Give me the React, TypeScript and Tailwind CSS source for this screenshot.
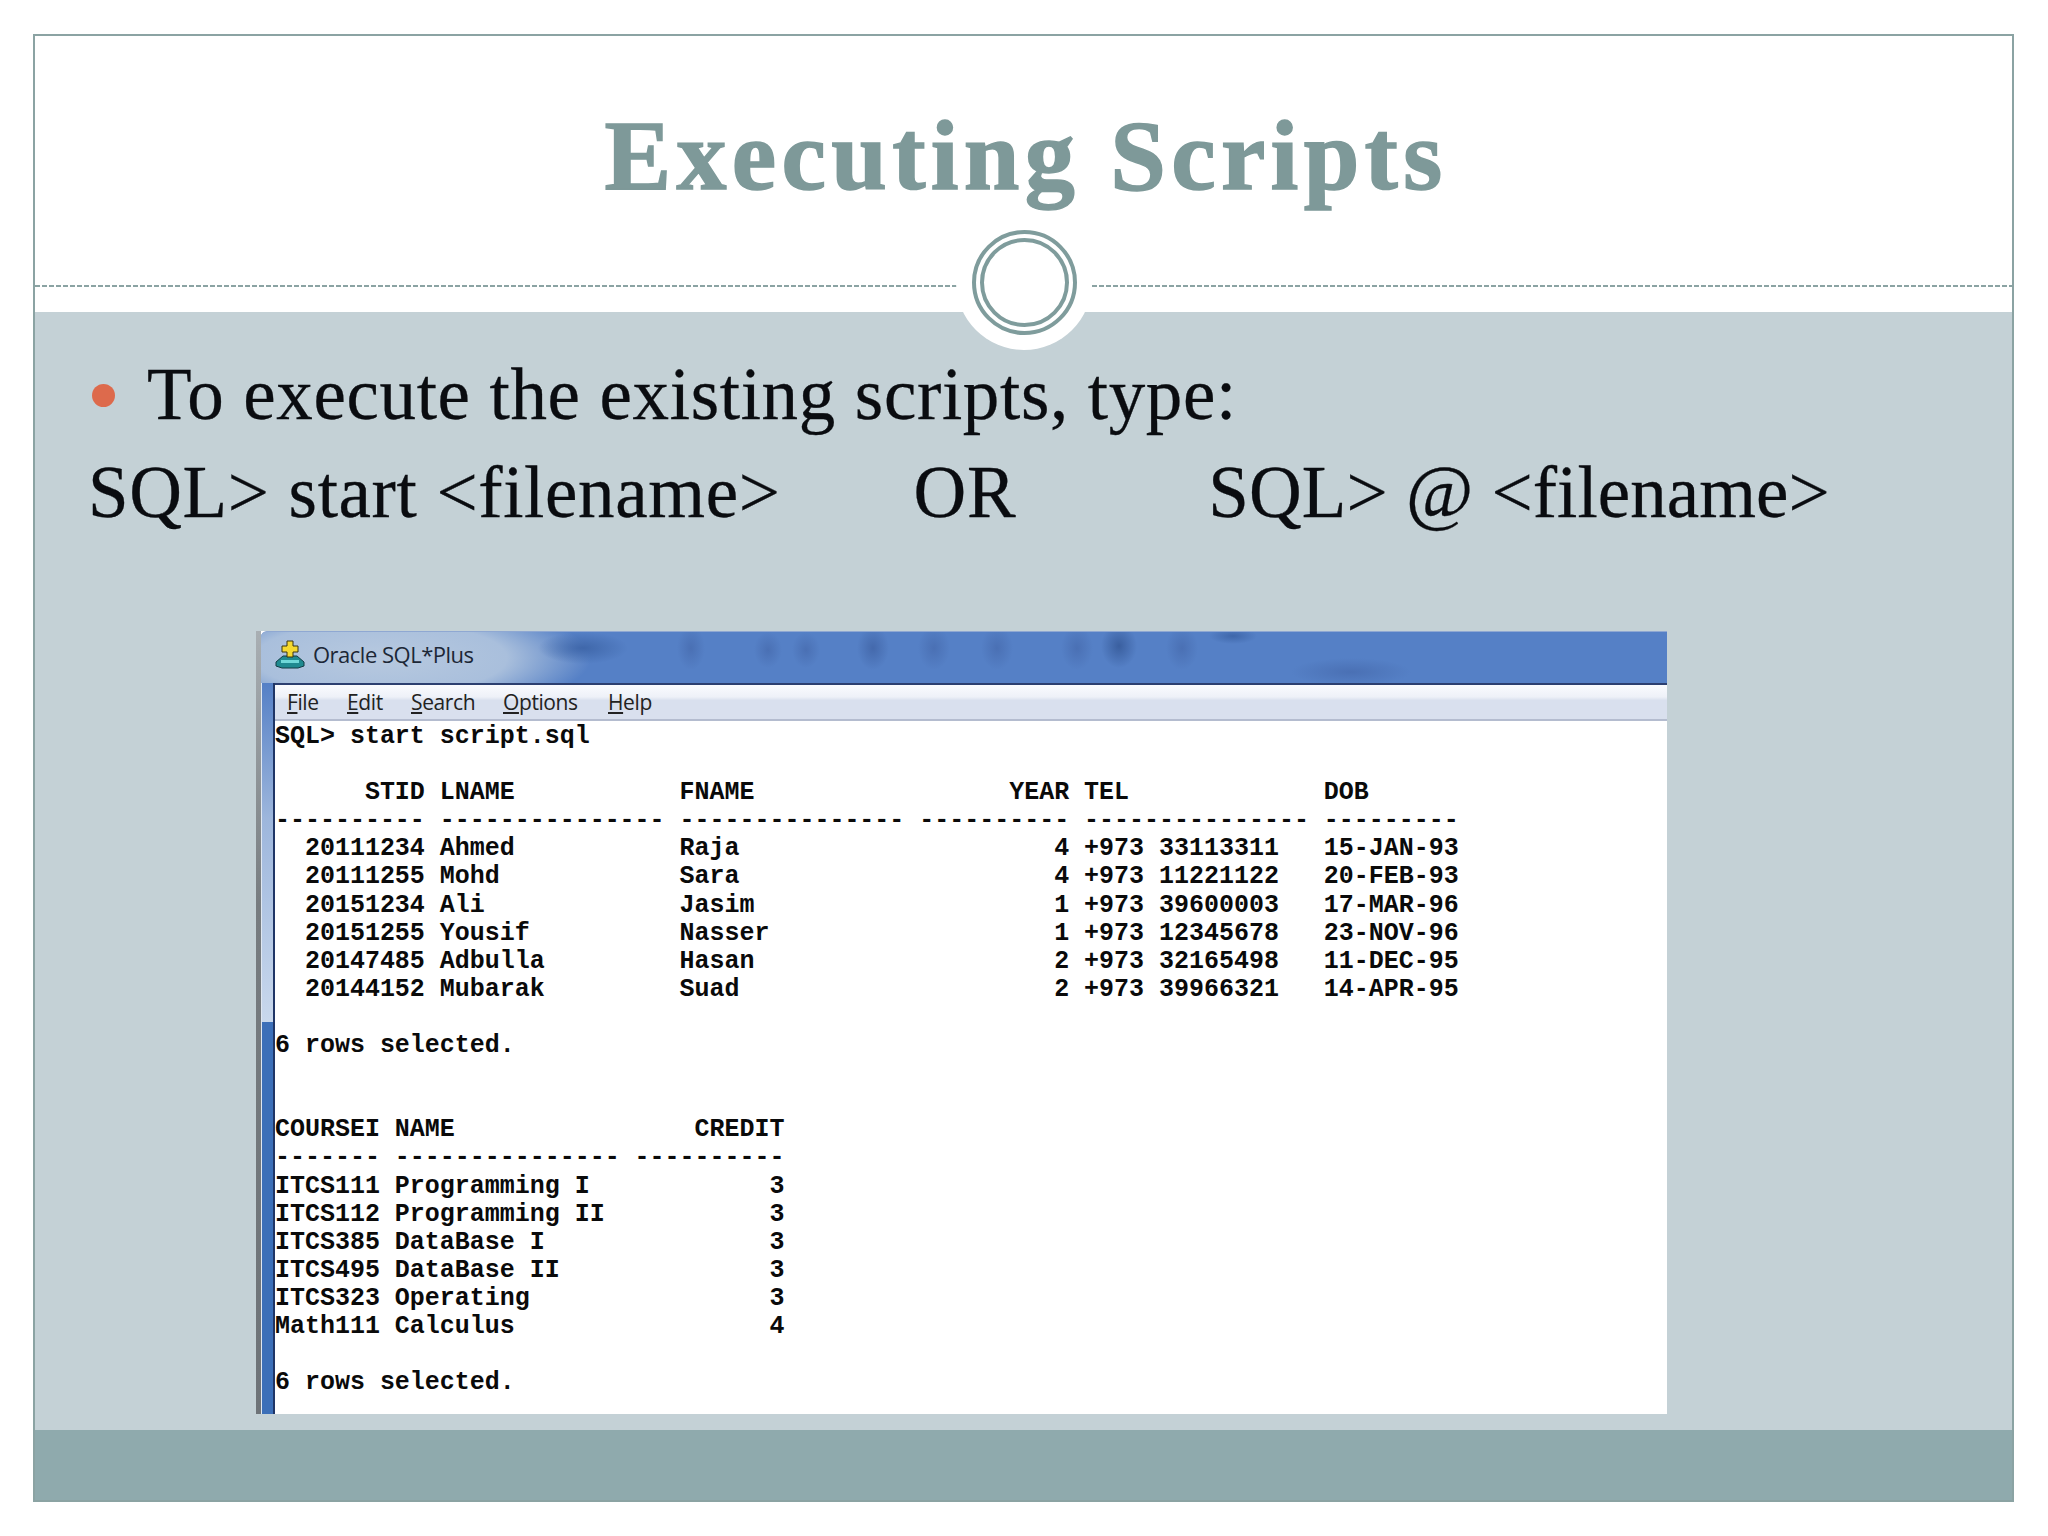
const rows1: [string, string, string, string, string, string][] = [
  ["20111234", "Ahmed", "Raja", "4", "+973 33113311", "15-JAN-93"],
  ["20111255", "Mohd", "Sara", "4", "+973 11221122", "20-FEB-93"],
  ["20151234", "Ali", "Jasim", "1", "+973 39600003", "17-MAR-96"],
  ["20151255", "Yousif", "Nasser", "1", "+973 12345678", "23-NOV-96"],
  ["20147485", "Adbulla", "Hasan", "2", "+973 32165498", "11-DEC-95"],
  ["20144152", "Mubarak", "Suad", "2", "+973 39966321", "14-APR-95"],
];
const rows2: [string, string, string][] = [
  ["ITCS111", "Programming I", "3"],
  ["ITCS112", "Programming II", "3"],
  ["ITCS385", "DataBase I", "3"],
  ["ITCS495", "DataBase II", "3"],
  ["ITCS323", "Operating", "3"],
  ["Math111", "Calculus", "4"],
];
const fmt1 = (r: string[]) =>
  `${r[0].padStart(10)} ${r[1].padEnd(15)} ${r[2].padEnd(15)} ${r[3].padStart(10)} ${r[4].padEnd(15)} ${r[5]}`;
const fmt2 = (r: string[]) => `${r[0].padEnd(7)} ${r[1].padEnd(15)} ${r[2].padStart(10)}`;
const d = (n: number) => "-".repeat(n);
const output = [
  "SQL> start script.sql",
  "",
  fmt1(["STID", "LNAME", "FNAME", "YEAR", "TEL", "DOB"]),
  [d(10), d(15), d(15), d(10), d(15), d(9)].join(" "),
  ...rows1.map(fmt1),
  "",
  "6 rows selected.",
  "",
  "",
  `COURSEI ${"NAME".padEnd(15)} ${"CREDIT".padStart(10)}`,
  [d(7), d(15), d(10)].join(" "),
  ...rows2.map(fmt2),
  "",
  "6 rows selected.",
].join("\n");

const Menu = ({ k, rest, w }: { k: string; rest: string; w: string }) => (
  <span className={w}>
    <span className="underline underline-offset-2">{k}</span>
    {rest}
  </span>
);

export default function App() {
  return (
    <div className="w-[2048px] h-[1536px] bg-white pt-[34px] pl-[33px] font-['Liberation_Serif',serif]">
      <div className="w-[1981px] h-[1468px] border-2 border-[#8ba3a3] flex flex-col">
        <header className="relative h-[276px] bg-white flex justify-center">
          <h1 className="mt-[65px] ml-[5px] text-[100px] leading-[110px] font-bold text-[#7e9999] tracking-[5.3px] [-webkit-text-stroke:1.5px_#7e9999]">Executing Scripts</h1>
          <div className="absolute left-0 right-0 top-[249px] h-[2px] bg-[repeating-linear-gradient(90deg,#8ba3a3_0px,#8ba3a3_5px,transparent_5px,transparent_7px)]" />
          <div className="absolute left-[921px] top-[178px] w-[136px] h-[136px] rounded-full bg-white flex items-center justify-center">
            <div className="w-[105px] h-[105px] rounded-full border-[4px] border-[#7f9c9c] flex items-center justify-center">
              <div className="w-[89px] h-[89px] rounded-full border-[4px] border-[#7f9c9c]" />
            </div>
          </div>
        </header>
        <main className="flex-1 bg-[#c4d1d6] pl-[53px] text-[#0a0c10] text-[73px] leading-[80px] tracking-[0.65px] [-webkit-text-stroke:0.3px_#0a0c10]">
          <div className="flex items-center mt-[43px] h-[80px]">
            <span className="ml-[4px] w-[23px] h-[23px] rounded-full bg-[#dd6a4c]" />
            <span className="ml-[32px]">To execute the existing scripts, type:</span>
          </div>
          <div className="flex mt-[18px] whitespace-pre">
            <span>SQL&gt; start &lt;filename&gt;</span>
            <span className="ml-[133px]">OR</span>
            <span className="ml-[192px] tracking-[0.05px]">SQL&gt; @ &lt;filename&gt;</span>
          </div>
          <div className="ml-[168px] mt-[98px] w-[1411px] h-[783px] flex tracking-normal [-webkit-text-stroke:0px]">
            <div className="w-[5px] bg-[linear-gradient(#a9afb3,#777c80_35%,#6e7378)]" />
            <div className="flex-1 flex flex-col bg-white min-w-0">
              <div className="h-[52px] shrink-0 flex items-center pl-[14px] pb-[7px] bg-[#5580c6] bg-[radial-gradient(ellipse_45px_16px_at_322px_16px,#3f67aa,transparent),radial-gradient(ellipse_14px_22px_at_430px_16px,#4a70b4,transparent),radial-gradient(ellipse_14px_18px_at_507px_18px,#4a70b4,transparent),radial-gradient(ellipse_14px_18px_at_545px_18px,#4a70b4,transparent),radial-gradient(ellipse_16px_22px_at_612px_16px,#4469ac,transparent),radial-gradient(ellipse_16px_22px_at_673px_16px,#4a70b4,transparent),radial-gradient(ellipse_16px_22px_at_736px_16px,#4a70b4,transparent),radial-gradient(ellipse_16px_22px_at_816px_16px,#4a70b4,transparent),radial-gradient(ellipse_18px_22px_at_858px_14px,#3a5f9f,transparent),radial-gradient(ellipse_16px_22px_at_921px_16px,#4a70b4,transparent),radial-gradient(ellipse_60px_14px_at_1090px_40px,#4a70b4,transparent),radial-gradient(ellipse_24px_8px_at_972px_4px,#3f67aa,transparent),radial-gradient(ellipse_210px_60px_at_120px_26px,#b7c9df_0%,#a9bfdc_60%,transparent_100%)] border-t border-[#8fa8d2] rounded-tl-[6px] text-[#1c2736] font-['Open_Sans',sans-serif] text-[22px] leading-none">
                <svg viewBox="0 0 30 30" className="w-[30px] h-[30px]">
                  <path d="M1 23 L8 17 H22 L29 23 V27 L23 29 H7 L1 27 Z" fill="#1f8a90" stroke="#123c44" />
                  <rect x="6" y="21" width="18" height="3" fill="#6fd8d8" />
                  <path d="M12 2 H18 V7 H23 V13 H18 V18 H12 V13 H7 V7 H12 Z" fill="#f5d930" stroke="#3a3410" />
                </svg>
                <span className="ml-[8px] tracking-[-0.5px]">Oracle SQL*Plus</span>
              </div>
              <div className="flex-1 flex min-h-0">
                <div className="w-[12px] shrink-0 flex flex-col border-l border-[#dfe7f1]">
                  <div className="flex-1 bg-[linear-gradient(#5580c6,#9db6dc_40%,#c9d8ec)]" />
                  <div className="h-[392px] bg-[#3c6fb8]" />
                </div>
                <div className="flex-1 flex flex-col border-l-2 border-[#1f3566] min-w-0">
                  <div className="h-[38px] shrink-0 flex items-center pl-[12px] border-t-2 border-[#2c3f70] border-b-2 border-b-[#b4bccf] bg-[linear-gradient(#fafbfe_0%,#eef1f8_35%,#d9e0ee_45%,#d9e0ee_100%)] text-[#222222] font-['Open_Sans',sans-serif] text-[21px] leading-none tracking-[-0.4px]">
                    <Menu k="F" rest="ile" w="w-[60px]" />
                    <Menu k="E" rest="dit" w="w-[64px]" />
                    <Menu k="S" rest="earch" w="w-[92px]" />
                    <Menu k="O" rest="ptions" w="w-[105px]" />
                    <Menu k="H" rest="elp" w="w-[60px]" />
                  </div>
                  <pre className="font-['Liberation_Mono',monospace] font-bold text-[24.98px] leading-[28.1px] text-[#0a0a0a] mt-[2px] overflow-hidden">{output}</pre>
                </div>
              </div>
            </div>
          </div>
        </main>
        <footer className="h-[70px] bg-[#8faaad]" />
      </div>
    </div>
  );
}
